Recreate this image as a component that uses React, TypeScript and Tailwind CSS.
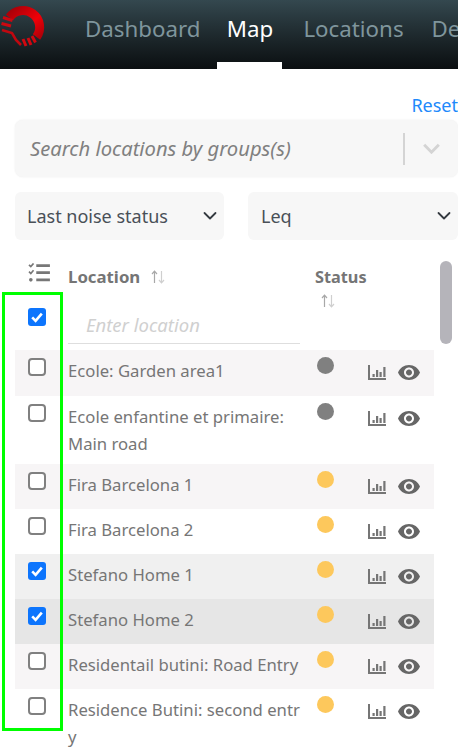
const font = "[font-family:'Noto_Sans',sans-serif]";

function Check({ on }: { on: boolean }) {
  return on ? (
    <span className="flex h-[18px] w-[18px] items-center justify-center rounded-[3px] bg-[#0d75fd]">
      <svg viewBox="0 0 18 18" className="h-[18px] w-[18px]">
        <path d="M4.2 9.4 7.6 12.8 13.8 5.6" fill="none" stroke="#fff" strokeWidth="2.6" />
      </svg>
    </span>
  ) : (
    <span className="block h-[18px] w-[18px] rounded-[4px] border-2 border-[#808080] bg-white" />
  );
}

function Bars() {
  return (
    <svg viewBox="0 0 18 15" className="h-[15px] w-[18px]" fill="#757575">
      <path d="M0 0h2v13H18v2H0z" />
      <path d="M4.5 9h2.2v3H4.5zM8 5h2.2v7H8zM11.5 7h2.2v5h-2.2zM15.3 2h2.2v10h-2.2z" />
    </svg>
  );
}

function Eye() {
  return (
    <svg viewBox="1 4.5 22 15" className="h-[15px] w-[22px]" fill="#666">
      <path d="M12 4.5C7 4.5 2.73 7.61 1 12c1.73 4.39 6 7.5 11 7.5s9.27-3.11 11-7.5c-1.73-4.39-6-7.5-11-7.5zM12 17c-2.76 0-5-2.24-5-5s2.24-5 5-5 5 2.24 5 5-2.24 5-5 5zm0-8c-1.66 0-3 1.34-3 3s1.34 3 3 3 3-1.34 3-3-1.34-3-3-3z" />
    </svg>
  );
}

function Sort({ className }: { className: string }) {
  return (
    <svg viewBox="0 0 16 14" className={className} fill="none" strokeWidth="1.2">
      <path d="M4.5 13V1.5M2 4l2.5-2.8L7 4" stroke="#a8a8a8" />
      <path d="M11.5 1v11.5M9 10l2.5 2.8L14 10" stroke="#cfcfcf" />
    </svg>
  );
}

function Chevron() {
  return (
    <svg viewBox="0 0 14 9" className="pointer-events-none absolute right-[7px] top-1/2 h-[9px] w-[14px] -translate-y-1/2">
      <path d="M1.5 1.5 7 7l5.5-5.5" fill="none" stroke="#343a40" strokeWidth="1.8" strokeLinecap="round" strokeLinejoin="round" />
    </svg>
  );
}

type Row = { name: React.ReactNode; h: string; bg: string; dot: string; on: boolean };

const rows: Row[] = [
  { name: "Ecole: Garden area1", h: "h-[46px]", bg: "bg-[#f7f5f6]", dot: "bg-[#808080]", on: false },
  { name: <>Ecole enfantine et primaire:<br />Main road</>, h: "h-[68px]", bg: "bg-white", dot: "bg-[#808080]", on: false },
  { name: "Fira Barcelona 1", h: "h-[45px]", bg: "bg-[#f7f5f6]", dot: "bg-[#fdc85c]", on: false },
  { name: "Fira Barcelona 2", h: "h-[45px]", bg: "bg-white", dot: "bg-[#fdc85c]", on: false },
  { name: "Stefano Home 1", h: "h-[45px]", bg: "bg-[#f0f0f0]", dot: "bg-[#fdc85c]", on: true },
  { name: "Stefano Home 2", h: "h-[45px]", bg: "bg-[#e6e6e6]", dot: "bg-[#fdc85c]", on: true },
  { name: "Residentail butini: Road Entry", h: "h-[45px]", bg: "bg-[#f7f5f6]", dot: "bg-[#fdc85c]", on: false },
  { name: <>Residence Butini: second entr<br />y</>, h: "h-[68px]", bg: "bg-white", dot: "bg-[#fdc85c]", on: false },
];

export default function App() {
  return (
    <div className={`relative h-[754px] w-[458px] overflow-hidden bg-white ${font}`}>
      <nav className="flex h-[69px] items-stretch overflow-hidden bg-gradient-to-b from-[#34484f] to-[#0b0f11] text-[22.3px] text-[#7f959c]">
        <div className="w-[85px] shrink-0">
          <svg viewBox="0 0 50 52" className="h-[52px] w-[50px]" fill="none">
            <defs>
              <linearGradient id="r" x1="0" y1="0" x2="1" y2="1">
                <stop offset="0" stopColor="#a80008" />
                <stop offset="0.6" stopColor="#f00008" />
                <stop offset="1" stopColor="#b00008" />
              </linearGradient>
            </defs>
            <path d="M9.5 17.5A16.5 16.5 0 1 1 36.5 37" stroke="url(#r)" strokeWidth="9" />
            <path d="M3 17.5l9.5 3M1.5 23.5l9.5 2.5" stroke="#cc0810" strokeWidth="3" />
            <path d="M2 30l10 3 4 7 5 5" stroke="#c00810" strokeWidth="2.6" />
            <path d="M23 39l3 7M28 38l3 7M32 36l3.5 6.5" stroke="#d00810" strokeWidth="3" />
          </svg>
        </div>
        <a className="flex items-center pb-[12px]">Dashboard</a>
        <a className="ml-[17px] flex w-[65px] shrink-0 items-center justify-center border-b-[7px] border-white pb-[5px] text-white">Map</a>
        <a className="ml-[21px] flex items-center pb-[12px]">Locations</a>
        <a className="ml-[28px] flex items-center pb-[12px]">Devices</a>
      </nav>

      <div className="pl-[15px]">
        <div className="flex h-[51px] items-end justify-end pb-[3px] text-[18px] leading-[24px] text-[#2189fb]">Reset</div>

        <div className="flex h-[57px] items-center rounded-[8px] bg-[#f7f7f7] pl-[15px] text-[20.2px] italic text-[#808080] shadow-[0_0_2px_rgba(0,0,0,0.08)]">
          <span className="flex-1 whitespace-nowrap">Search locations by groups(s)</span>
          <span className="h-[32px] w-[2px] bg-[#d4d4d4]" />
          <svg viewBox="0 0 20 12" className="ml-[17px] mr-[17px] h-[11px] w-[19px]">
            <path d="M2 2l8 8 8-8" fill="none" stroke="#d4d4d4" strokeWidth="3.2" />
          </svg>
        </div>

        <div className="mt-[15px] flex gap-[24px] text-[18px] text-[#495057]">
          <div className="relative flex h-[48px] w-[209px] items-center rounded-[6px] bg-[#f7f7f7] pl-[12px]">
            Last noise status
            <Chevron />
          </div>
          <div className="relative flex h-[48px] w-[210px] items-center rounded-[6px] bg-[#f7f7f7] pl-[13px]">
            Leq
            <Chevron />
          </div>
        </div>

        <div className="mt-[21px] w-[419px]">
          <div className="flex h-[89px] pt-[2px]">
            <div className="w-[53px] shrink-0 pl-[12px]">
              <svg viewBox="0 0 24 22" className="h-[20px] w-[24px]" fill="#777">
                <path d="M9 1.5h15v3H9zM9 9h15v3H9zM9 17h15v3H9z" />
                <path d="M1 2l2 2 3-3.5" fill="none" stroke="#777" strokeWidth="1.8" />
                <path d="M1 9.5l2 2 3-3.5" fill="none" stroke="#777" strokeWidth="1.8" />
                <circle cx="3" cy="18.5" r="2" />
              </svg>
              <div className="mt-[25px] pl-[1px]"><Check on /></div>
            </div>
            <div className="w-[232px] shrink-0">
              <div className="flex items-center pt-[2px] text-[16.8px] font-bold leading-[24px] text-[#757575]">
                Location
                <Sort className="ml-[10px] h-[14px] w-[16px]" />
              </div>
              <div className="mt-[17px] flex h-[38px] items-center border-b border-[#dedede] pl-[18px] text-[18.5px] italic text-[#d0d0d0]">Enter location</div>
            </div>
            <div className="pl-[15px]">
              <div className="pt-[2px] text-[16.3px] font-bold leading-[24px] text-[#757575]">Status</div>
              <Sort className="ml-[5px] mt-[5px] h-[14px] w-[16px]" />
            </div>
          </div>

          {rows.map((r, i) => (
            <div key={i} className={`flex ${r.h} ${r.bg}`}>
              <div className="w-[53px] shrink-0 pl-[13px] pt-[8px]"><Check on={r.on} /></div>
              <div className="w-[232px] shrink-0 whitespace-nowrap pt-[7px] text-[16.7px] leading-[27px] text-[#767676]">{r.name}</div>
              <div className="w-[68px] shrink-0 pl-[17px] pt-[7px]">
                <span className={`block h-[17px] w-[17px] rounded-full ${r.dot}`} />
              </div>
              <div className="flex items-start gap-[12px] pt-[15px]">
                <Bars />
                <Eye />
              </div>
            </div>
          ))}
        </div>
      </div>

      <div className="absolute left-[440px] top-[261px] h-[83px] w-[12px] rounded-full bg-[#b5b4ba]" />
      <div className="pointer-events-none absolute left-[2px] top-[292px] h-[439px] w-[61px] border-[3px] border-[#00ff00]" />
    </div>
  );
}
